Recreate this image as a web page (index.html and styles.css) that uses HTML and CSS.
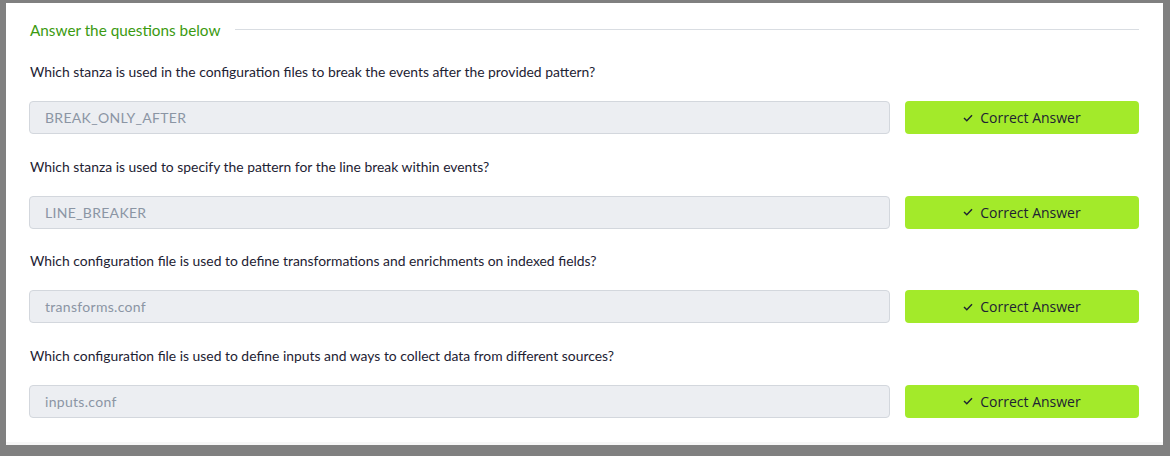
FILE: index.html
```html
<!DOCTYPE html>
<html>
<head>
<meta charset="utf-8">
<link rel="stylesheet" href="styles.css">
</head>
<body>
<div class="panel">
  <div class="heading">
    <span class="heading-text">Answer the questions below</span>
    <span class="heading-line"></span>
  </div>
  <div class="question">
    <p class="q-text">Which stanza is used in the configuration files to break the events after the provided pattern?</p>
    <div class="answer-row">
      <div class="answer-input">BREAK_ONLY_AFTER</div>
      <button class="answer-btn"><svg class="check" width="10" height="8" viewBox="0 0 10 8"><polyline points="1,4 3.8,6.8 9,1.2" fill="none" stroke="#1d2233" stroke-width="1.4"/></svg>Correct Answer</button>
    </div>
  </div>
  <div class="question">
    <p class="q-text">Which stanza is used to specify the pattern for the line break within events?</p>
    <div class="answer-row">
      <div class="answer-input">LINE_BREAKER</div>
      <button class="answer-btn"><svg class="check" width="10" height="8" viewBox="0 0 10 8"><polyline points="1,4 3.8,6.8 9,1.2" fill="none" stroke="#1d2233" stroke-width="1.4"/></svg>Correct Answer</button>
    </div>
  </div>
  <div class="question">
    <p class="q-text">Which configuration file is used to define transformations and enrichments on indexed fields?</p>
    <div class="answer-row">
      <div class="answer-input">transforms.conf</div>
      <button class="answer-btn"><svg class="check" width="10" height="8" viewBox="0 0 10 8"><polyline points="1,4 3.8,6.8 9,1.2" fill="none" stroke="#1d2233" stroke-width="1.4"/></svg>Correct Answer</button>
    </div>
  </div>
  <div class="question">
    <p class="q-text">Which configuration file is used to define inputs and ways to collect data from different sources?</p>
    <div class="answer-row">
      <div class="answer-input">inputs.conf</div>
      <button class="answer-btn"><svg class="check" width="10" height="8" viewBox="0 0 10 8"><polyline points="1,4 3.8,6.8 9,1.2" fill="none" stroke="#1d2233" stroke-width="1.4"/></svg>Correct Answer</button>
    </div>
  </div>
</div>
</body>
</html>
```
FILE: styles.css
```css
html, body {
  margin: 0;
  padding: 0;
}
body {
  background: #808080;
  padding: 3px 7px 0 6px;
  height: 456px;
  box-sizing: border-box;
  font-family: Lato, "Liberation Sans", sans-serif;
}
.panel {
  background: #fff;
  height: 442px;
  box-sizing: border-box;
  padding: 16px 24px 0 23px;
  border-bottom: 3px solid #f7f7f7;
}
.heading {
  display: flex;
  align-items: center;
  gap: 15px;
  height: 22px;
  margin-bottom: 21px;
}
.heading-text {
  color: #3b9a10;
  font-size: 15.3px;
  white-space: nowrap;
  padding-left: 1px;
}
.heading-line {
  flex: 1;
  height: 1px;
  background: #d9dde2;
  margin-top: -2px;
}
.question {
  margin-bottom: 22.67px;
}
.q-text {
  margin: 0 0 19px 1px;
  font-size: 13.88px;
  line-height: 20px;
  color: #1d2233;
}
.answer-row {
  display: flex;
  gap: 15px;
}
.answer-input {
  flex: 1;
  height: 33px;
  box-sizing: border-box;
  background: #eceef2;
  border: 1px solid #d3d7dd;
  border-radius: 4px;
  padding: 0 15px;
  display: flex;
  align-items: center;
  font-size: 14px;
  letter-spacing: 0.3px;
  color: #8b95a4;
}
.answer-btn {
  width: 234px;
  height: 33px;
  border: none;
  border-radius: 4px;
  background: #a3ea2a;
  color: #1d2233;
  font-family: "Open Sans", sans-serif;
  font-size: 14px;
  display: flex;
  align-items: center;
  justify-content: center;
  gap: 7px;
  padding: 0;
}
.check {
  display: block;
}
```
